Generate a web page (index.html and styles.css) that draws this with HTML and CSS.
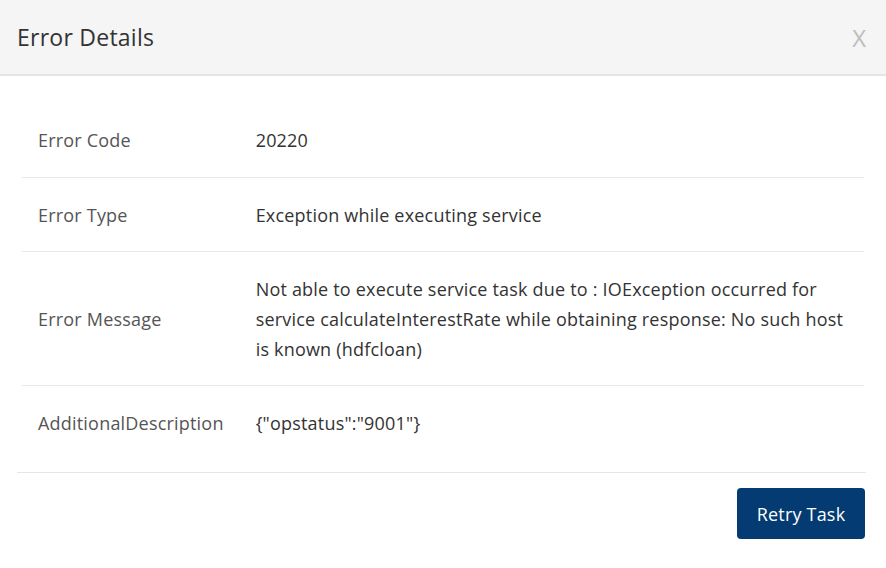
FILE: index.html
```html
<!DOCTYPE html>
<html>
<head>
<meta charset="utf-8">
<link rel="stylesheet" href="styles.css">
</head>
<body>
<div class="modal">
  <div class="modal-header">
    <h4 class="modal-title">Error Details</h4>
    <span class="close">X</span>
  </div>
  <div class="modal-body">
    <table class="details">
      <tr>
        <td class="label">Error Code</td>
        <td class="value">20220</td>
      </tr>
      <tr>
        <td class="label">Error Type</td>
        <td class="value">Exception while executing service</td>
      </tr>
      <tr>
        <td class="label">Error Message</td>
        <td class="value">Not able to execute service task due to : IOException occurred for service calculateInterestRate while obtaining response: No such host is known (hdfcloan)</td>
      </tr>
      <tr>
        <td class="label">AdditionalDescription</td>
        <td class="value">{"opstatus":"9001"}</td>
      </tr>
    </table>
  </div>
  <div class="modal-footer">
    <button class="btn-primary">Retry Task</button>
  </div>
</div>
</body>
</html>
```
FILE: styles.css
```css
* { box-sizing: border-box; }
html, body { margin: 0; padding: 0; background: #fff; }
body {
  font-family: "Open Sans", "Noto Sans", sans-serif;
  color: #333;
}
.modal { width: 886px; height: 568px; }
.modal-header {
  height: 76px;
  background: #f5f5f5;
  border-bottom: 2px solid #e4e4e4;
  display: flex;
  align-items: center;
  justify-content: space-between;
  padding: 0 20px 0 17px;
}
.modal-title {
  margin: 0;
  font-size: 23px;
  font-weight: 400;
  color: #333;
  letter-spacing: 0.25px;
}
.close {
  font-size: 24px;
  color: #bdbdbd;
  font-weight: 400;
}
.modal-body { padding: 27px 22px 0 22px; }
.details {
  width: 100%;
  border-collapse: collapse;
  font-size: 18px;
  letter-spacing: 0.2px;
}
.details td {
  padding: 22px 16px 21px 16px;
  line-height: 30px;
  vertical-align: middle;
  border-top: 1px solid #e8e8e8;
}
.details tr:first-child td { border-top: none; padding-bottom: 22px; }
.details .label { width: 215px; color: #555; }
.details .value { color: #333; }
.modal-footer {
  margin: 13px 20px 0 17px;
  border-top: 1px solid #e5e5e5;
  padding-top: 15px;
  display: flex;
  justify-content: flex-end;
}
.btn-primary {
  width: 128px;
  height: 51px;
  background: #033b72;
  color: #fff;
  border: none;
  border-radius: 4px;
  font-family: "Open Sans", "Noto Sans", sans-serif;
  font-size: 18px;
  letter-spacing: 0.2px;
  margin-right: 1px;
}
```
